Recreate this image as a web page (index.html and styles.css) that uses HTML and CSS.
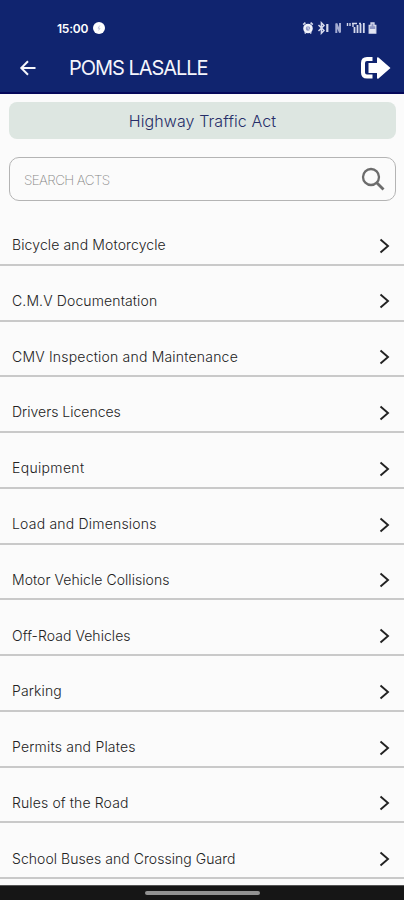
FILE: index.html
```html
<!DOCTYPE html>
<html lang="en">
<head>
<meta charset="utf-8">
<title>POMS LASALLE</title>
<link rel="stylesheet" href="styles.css">
</head>
<body>
<header class="header">
  <div class="status">
    <span class="time">15:00</span>
    <svg class="dot" viewBox="0 0 12 12" width="12" height="12"><circle cx="6" cy="6" r="6" fill="#fff"/><path d="M6.8 3.5 5 6.2h2L5.6 8.4" fill="none" stroke="#c3c6da" stroke-width="1"/></svg>
    <svg class="indicators" viewBox="0 0 76 14" width="76" height="14" fill="none" stroke="#d5d9ec">
      <circle cx="6" cy="7.500" r="3.500" fill="#8e97c4" stroke="#f0f2fa" stroke-width="2.600"/><path d="M1.200 3.600 3.400 1.600M10.800 3.600 8.600 1.600M2.800 12.500l1-1.300M9.200 12.500l-1-1.300" stroke-width="1.600"/><path d="M6 5.500v2.200l1.800.8" stroke-width="1"/>
      <path d="m16.500 4 5.500 5.500-2.600 2.700V1.800L22 4.500 16.500 10" stroke-width="1.500"/><path d="M25.300 3v8" stroke-width="2.200"/>
      <path d="M34.300 12V2.500l3.700 9V2" stroke="#a4acd2" stroke-width="2"/>
      <path d="M45.500 2v3M48 2v3M50 2.500h5M51 2.500v3.500M57 2.500h2" stroke-width="1.400"/><path d="M52.500 12V6M55.500 12V4M58.500 12V3M61.800 12V2" stroke-width="1.800"/>
      <path d="M67.200 12.200V4.500h1.800V2h3v2.500h1.800v7.700z" fill="#8e97c4" stroke-width="1.300"/><path d="M67.500 8h6v4h-6z" fill="#e3e6f3" stroke="none"/>
    </svg>
  </div>
  <div class="toolbar">
    <svg class="back" viewBox="0 0 18 16" width="18" height="16" fill="none" stroke="#f4f5fb" stroke-width="2"><path d="M16.500 8H2.500M9 1.300 2.300 8 9 14.700"/></svg>
    <h1 class="title">POMS LASALLE</h1>
    <svg class="logout" viewBox="0 0 32 24" width="32" height="24"><path d="M12.500 3H7Q3 3 3 7v9.500q0 4 4 4h5.500" fill="none" stroke="#fff" stroke-width="4"/><path d="M8.500 7h8.500V2.500Q17 .5 18.500 1.500L30.500 12 18.500 22.500Q17 23.500 17 21.500V17H8.500z" fill="#fff"/></svg>
  </div>
</header>
<main>
  <h2 class="act">Highway Traffic Act</h2>
  <div class="search">
    <span class="placeholder">SEARCH ACTS</span>
    <svg viewBox="0 0 24 24" width="24" height="24" fill="none" stroke="#6c6c6c"><circle cx="10" cy="10" r="8" stroke-width="2.300"/><path d="m15.500 15.500 7 7" stroke-width="2.900"/></svg>
  </div>
  <ul class="list">
    <li><span class="track-s">Bicycle and Motorcycle</span><svg class="chev" viewBox="0 0 11 16"><path d="m1.500 1.500 7.500 6.500-7.500 6.500"/></svg></li>
    <li><span class="track-s">C.M.V Documentation</span><svg class="chev" viewBox="0 0 11 16"><path d="m1.500 1.500 7.500 6.500-7.500 6.500"/></svg></li>
    <li><span class="track-m">CMV Inspection and Maintenance</span><svg class="chev" viewBox="0 0 11 16"><path d="m1.500 1.500 7.500 6.500-7.500 6.500"/></svg></li>
    <li><span>Drivers Licences</span><svg class="chev" viewBox="0 0 11 16"><path d="m1.500 1.500 7.500 6.500-7.500 6.500"/></svg></li>
    <li><span class="track-l">Equipment</span><svg class="chev" viewBox="0 0 11 16"><path d="m1.500 1.500 7.500 6.500-7.500 6.500"/></svg></li>
    <li><span class="track-m">Load and Dimensions</span><svg class="chev" viewBox="0 0 11 16"><path d="m1.500 1.500 7.500 6.500-7.500 6.500"/></svg></li>
    <li><span class="track-xs">Motor Vehicle Collisions</span><svg class="chev" viewBox="0 0 11 16"><path d="m1.500 1.500 7.500 6.500-7.500 6.500"/></svg></li>
    <li><span class="track-xs">Off-Road Vehicles</span><svg class="chev" viewBox="0 0 11 16"><path d="m1.500 1.500 7.500 6.500-7.500 6.500"/></svg></li>
    <li><span class="track-s">Parking</span><svg class="chev" viewBox="0 0 11 16"><path d="m1.500 1.500 7.500 6.500-7.500 6.500"/></svg></li>
    <li><span class="track-m">Permits and Plates</span><svg class="chev" viewBox="0 0 11 16"><path d="m1.500 1.500 7.500 6.500-7.500 6.500"/></svg></li>
    <li><span class="track-s">Rules of the Road</span><svg class="chev" viewBox="0 0 11 16"><path d="m1.500 1.500 7.500 6.500-7.500 6.500"/></svg></li>
    <li><span class="track-xs">School Buses and Crossing Guard</span><svg class="chev" viewBox="0 0 11 16"><path d="m1.500 1.500 7.500 6.500-7.500 6.500"/></svg></li>
  </ul>
</main>
<footer class="navbar"><div class="handle"></div></footer>
</body>
</html>
```
FILE: styles.css
```css
* { box-sizing: border-box; }
body {
  margin: 0;
  height: 900px;
  overflow: hidden;
  display: flex;
  flex-direction: column;
  background: #fbfbfb;
  font-family: Inter, "Liberation Sans", sans-serif;
}
.header {
  height: 94px;
  flex: none;
  background: #10246f;
  border-bottom: 2px solid #04085a;
  color: #fff;
}
.status {
  height: 42px;
  padding: 14px 26px 0 57px;
  display: flex;
  align-items: center;
}
.time { font-size: 12px; font-weight: 600; letter-spacing: -0.2px; }
.dot { margin-left: 5px; }
.indicators { margin-left: auto; }
.toolbar {
  height: 50px;
  padding: 1px 12px 0 19px;
  display: flex;
  align-items: center;
}
.title {
  margin: 1px 0 0 32px;
  font-size: 20px;
  font-weight: 400;
  letter-spacing: -1.04px;
  color: #f4f5fb;
}
.logout { margin-left: auto; }
main { flex: 1; min-height: 0; }
.act {
  height: 37px;
  margin: 8px 8px 0 9px;
  border-radius: 8px;
  background: #dde6e1;
  color: #262d68;
  font-size: 16px;
  font-weight: 300;
  letter-spacing: 0.1px;
  line-height: 39px;
  text-align: center;
}
.search {
  height: 44px;
  margin: 18px 8px 0 9px;
  padding: 0 10px 0 14px;
  border: 1px solid #b4b4b4;
  border-radius: 10px;
  display: flex;
  align-items: center;
  justify-content: space-between;
}
.placeholder {
  padding-top: 1px;
  font-size: 13.5px;
  font-weight: 200;
  color: #888;
  letter-spacing: -0.62px;
}
.list { list-style: none; margin: 9px 0 0; padding: 0; }
.list li {
  height: 55.77px;
  padding: 15.6px 14px 0 12px;
  border-bottom: 2px solid #c9c9c9;
  display: flex;
  align-items: center;
  justify-content: space-between;
  font-size: 14px;
  font-weight: 300;
  color: #222;
}
.track-xs { letter-spacing: 0.05px; }
.track-s { letter-spacing: 0.12px; }
.track-m { letter-spacing: 0.2px; }
.track-l { letter-spacing: 0.33px; }
.chev {
  width: 11px;
  height: 16px;
  margin-top: 2px;
  fill: none;
  stroke: #222;
  stroke-width: 1.9;
}
.navbar {
  height: 15px;
  flex: none;
  background: #161616;
  border-top: 1px solid #555;
  display: flex;
  justify-content: center;
}
.handle {
  width: 115px;
  height: 4px;
  margin-top: 5px;
  border-radius: 2px;
  background: #929292;
}
```
